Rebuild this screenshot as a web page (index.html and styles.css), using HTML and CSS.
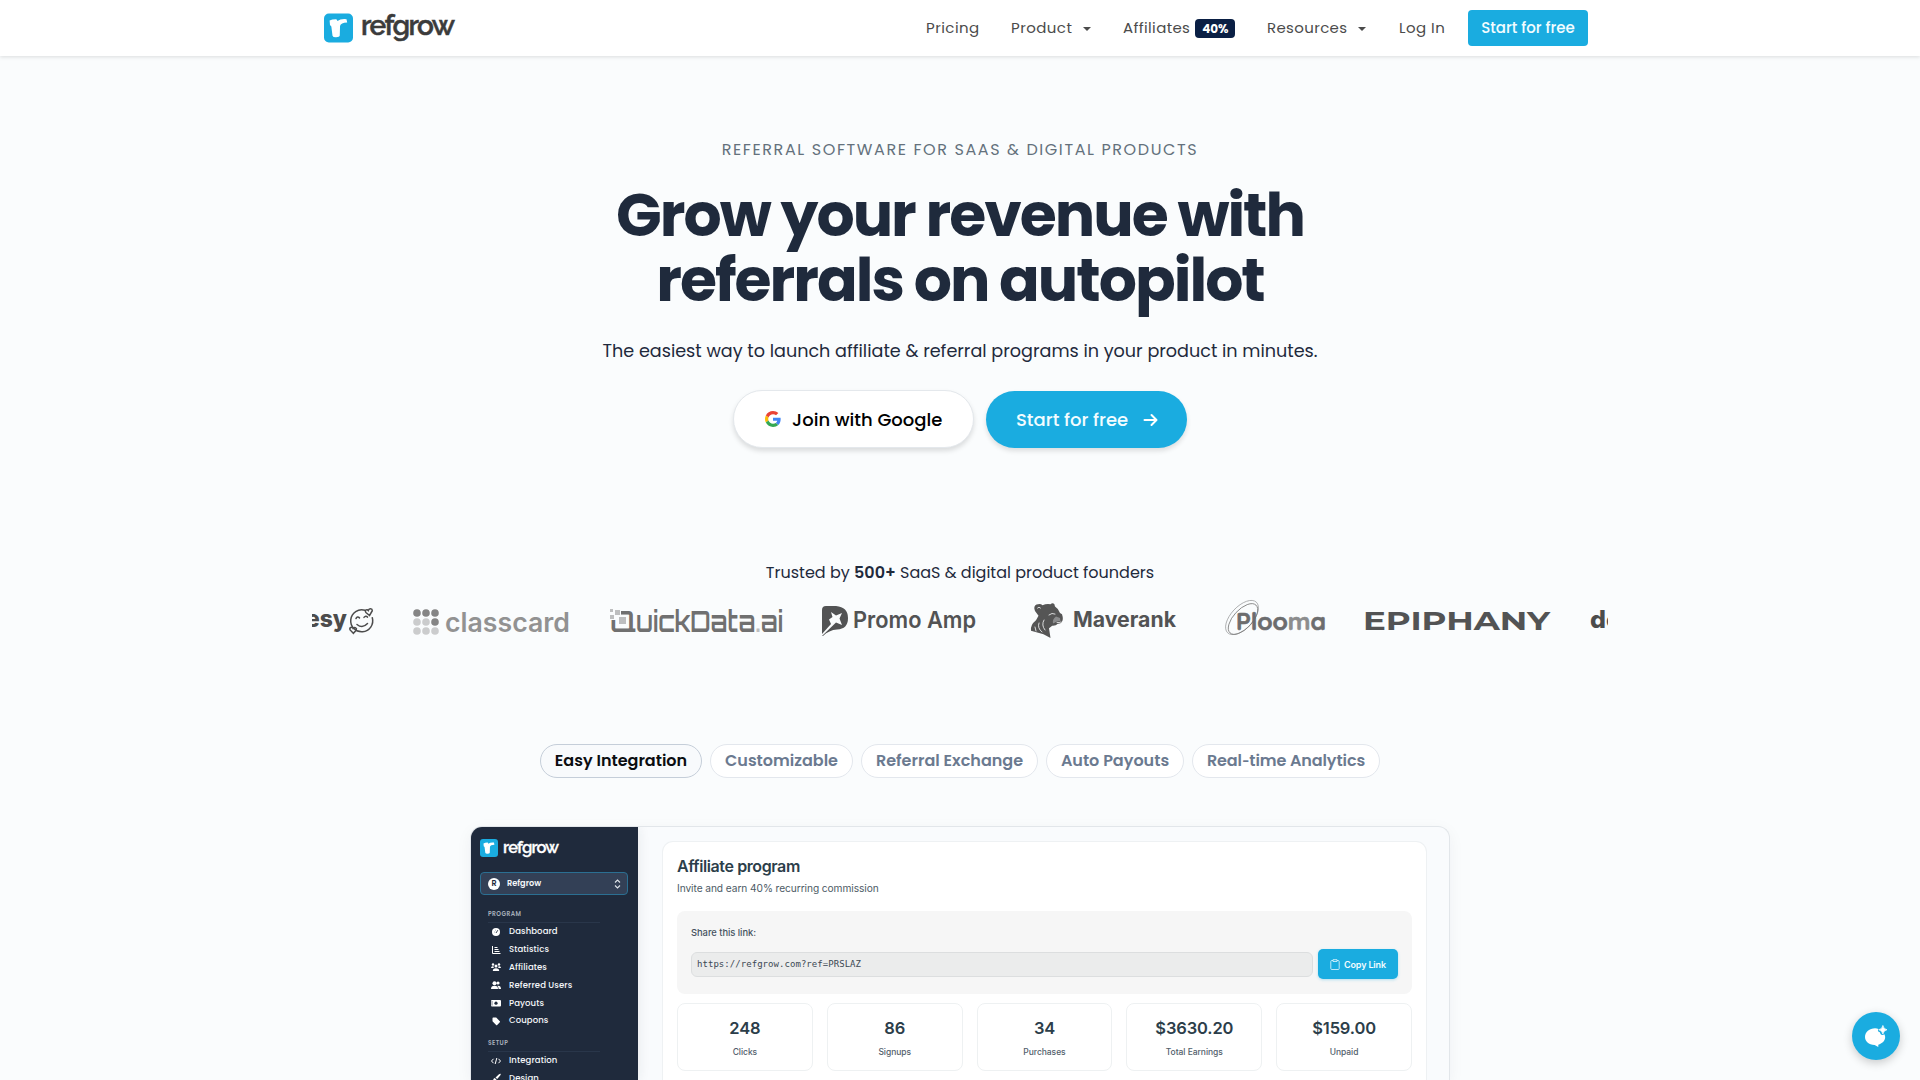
FILE: index.html
```html
<!DOCTYPE html>
<html lang="en">
<head>
<meta charset="utf-8">
<title>Refgrow</title>
<link rel="stylesheet" href="styles.css">
</head>
<body>
<svg class="defs" width="0" height="0" aria-hidden="true">
  <symbol id="mark" viewBox="0 0 30 30">
    <rect width="30" height="30" rx="5" fill="#1aace0"/>
    <path d="M5.800 7.300Q8.500 5.800 12.800 5.900L14 7.800Q17 5.300 23.300 5.900L24 9.400Q17.300 9.600 16.600 13L16.300 22.800Q16 24.500 12.500 24.600Q9.300 24.700 8.800 23L7.600 13.500L6.200 12Z" fill="#fff"/>
  </symbol>
</svg>

<header class="header">
  <a class="brand">
    <svg class="brand-mark"><use href="#mark"/></svg>
    <svg class="brand-word" viewBox="0 0 96 36"><text x="0" y="25" textLength="94">refgrow</text></svg>
  </a>
  <nav class="nav">
    <a class="n-pricing">Pricing</a>
    <a class="n-product">Product<i class="caret"></i></a>
    <a class="n-affiliates">Affiliates<b class="badge">40%</b></a>
    <a class="n-resources">Resources<i class="caret"></i></a>
    <a class="n-login">Log In</a>
    <a class="nav-cta">Start for free</a>
  </nav>
</header>

<main>
  <section class="hero">
    <p class="eyebrow">REFERRAL SOFTWARE FOR SAAS &amp; DIGITAL PRODUCTS</p>
    <h1>Grow your revenue with<br>referrals on autopilot</h1>
    <p class="lead">The easiest way to launch affiliate &amp; referral programs in your product in minutes.</p>
    <div class="actions">
      <a class="btn btn-google">
        <svg width="16" height="16" viewBox="0 0 48 48"><path fill="#EA4335" d="M24 9.500c3.540 0 6.710 1.220 9.210 3.600l6.850-6.850C35.900 2.380 30.470 0 24 0 14.620 0 6.510 5.380 2.560 13.220l7.980 6.190C12.430 13.720 17.740 9.500 24 9.500z"/><path fill="#4285F4" d="M46.980 24.550c0-1.570-.15-3.090-.38-4.550H24v9.020h12.940c-.58 2.960-2.260 5.480-4.780 7.180l7.730 6c4.510-4.180 7.090-10.360 7.090-17.650z"/><path fill="#FBBC05" d="M10.530 28.590c-.48-1.450-.76-2.990-.76-4.590s.27-3.140.76-4.590l-7.980-6.190C.92 16.460 0 20.120 0 24c0 3.880.92 7.540 2.560 10.780l7.970-6.190z"/><path fill="#34A853" d="M24 48c6.480 0 11.930-2.130 15.890-5.810l-7.730-6c-2.150 1.450-4.920 2.300-8.160 2.300-6.260 0-11.570-4.220-13.470-9.910l-7.980 6.190C6.510 42.620 14.620 48 24 48z"/></svg>
        <span>Join with Google</span>
      </a>
      <a class="btn btn-start"><span>Start for free</span>
        <svg width="15" height="14" viewBox="0 0 15 14" fill="none" stroke="#fff" stroke-width="2" stroke-linecap="round" stroke-linejoin="round"><path d="M1.500 7h11.500M8.500 2l5 5-5 5"/></svg>
      </a>
    </div>
  </section>

  <section class="trusted">
    <p>Trusted by <b>500+</b> SaaS &amp; digital product founders</p>
    <div class="logos">
      <svg width="63" height="48" fill="#4c4c4c">
        <text x="-6" y="31" font-size="23" font-weight="800" textLength="41" lengthAdjust="spacingAndGlyphs">esy</text>
        <g fill="none" stroke="#4c4c4c" stroke-width="1.500" stroke-linecap="round">
          <path d="M53 14.300a11 11 0 1 0 7.300 7.500"/><path d="M44 22.500q1.500-2.500 3.500-.6M52 21.400q1.800-2.200 3.500-.3M45 28.500q5.500 4.500 10.500-.9"/>
          <path d="M57.500 19.500l-3.600-3c-1.600-2 .8-4 2.400-2 1-2.500 4-2.300 4 .2zM41.300 37.300l-3.200-3.400c-1-2.300 1.800-3.600 3-1.400 1.700-1.800 4.200-.4 3.100 1.700z"/>
        </g>
      </svg>
      <svg width="158" height="48">
        <g fill="#858585"><circle cx="4" cy="17" r="3.800"/><circle cx="13" cy="17" r="3.800"/><circle cx="22" cy="17" r="3.800"/><circle cx="22" cy="26" r="3.800"/></g>
        <g fill="#cbcccd"><circle cx="4" cy="26" r="3.800"/><circle cx="13" cy="26" r="3.800"/><circle cx="4" cy="35" r="3.800"/><circle cx="13" cy="35" r="3.800"/><circle cx="22" cy="35" r="3.800"/></g>
        <text x="32" y="36" font-size="27" font-weight="600" fill="#929292" textLength="125" lengthAdjust="spacingAndGlyphs">classcard</text>
      </svg>
      <svg width="175" height="48" class="quick">
        <text x="1" y="36" font-size="29" font-weight="600" textLength="26" lengthAdjust="spacingAndGlyphs">Q</text>
        <text x="27" y="36" font-size="29" font-weight="600" textLength="147" lengthAdjust="spacingAndGlyphs">uickData<tspan fill="#bdbebf">.</tspan>ai</text>
        <rect x="0" y="12" width="12" height="12" fill="#fafcfd"/>
        <g fill="#bdbebf"><rect x="1" y="13" width="3" height="3"/><rect x="6" y="14" width="5" height="5"/><rect x="1" y="19" width="4" height="4"/><rect x="10" y="21" width="7" height="7"/></g>
      </svg>
      <svg width="154" height="48" fill="#525354">
        <path d="M4 10h10q12 1 12 12 0 11-11 11.500-8 .5-14 6.500H0V14q0-4 4-4z"/>
        <path fill="#fafcfd" d="M9 16l5 3.500 6-2.500-2.500 5.500L20 29l-6-2.500L2 38 0 40v-2L9 28l-2-4.500 3.500-2.500z"/>
        <text x="31" y="32" font-size="23" font-weight="600" textLength="123" lengthAdjust="spacingAndGlyphs">Promo Amp</text>
      </svg>
      <svg width="173" height="48">
        <path fill="#555" d="M21 15q-2-5 1.500-6.500 4-1.500 6 .8 4-2 8-1.100 2-1.800 3.800-.2l.7 2.600q4 2.600 5 6.400l2 1.300q1.700 5-.2 7.700-1 2-4 1.800-2 2.300-5.600 2l-3.200 2.400 1.500 9.700-7-3.700-12.500-3.500q-.8-6 5-10.500l2.500-4.500z"/>
        <path fill="none" stroke="#e8e9ea" stroke-width=".9" stroke-linecap="round" d="M23.500 12q1.500-2 3 0M35 19l3-1.500 3 .6M25 27q-2 5 3 9M30 24q-3 5 1 10M43 26.500q2 .5 4-.5M21 31l1 4"/>
        <path d="M42 20.500l4 1.500.5 3-3.500.5-4 2q-1-4 3-7z" fill="#8b8c8d"/>
        <text x="59" y="31" font-size="21" font-weight="700" fill="#525354" textLength="103" lengthAdjust="spacingAndGlyphs">Maverank</text>
      </svg>
      <svg width="102" height="48">
        <g fill="none" stroke="#a2a3a4" stroke-width=".8"><ellipse cx="17" cy="21.500" rx="21" ry="11" transform="rotate(-47 17 21.500)"/><ellipse cx="18" cy="23" rx="19" ry="9.500" transform="rotate(-47 18 23)" stroke="#777"/></g>
        <text class="plooma" x="11" y="34" font-size="24" font-weight="700" fill="#6c6d6e" stroke="#6c6d6e" stroke-width=".6" textLength="90" lengthAdjust="spacingAndGlyphs">Ploo<tspan fill="#8c8d8e" stroke="#8c8d8e">m</tspan>a</text>
      </svg>
      <svg width="187" height="48" fill="#525354"><text class="epiphany" x="-2" y="34" font-size="26" font-weight="700" textLength="187" lengthAdjust="spacingAndGlyphs">EPIPHANY</text></svg>
      <svg width="30" height="48" fill="#4c4c4c"><text x="0" y="32" font-size="24" font-weight="800" textLength="31" lengthAdjust="spacingAndGlyphs">de</text></svg>
    </div>
  </section>

  <div class="tabs">
    <a class="tab active">Easy Integration</a>
    <a class="tab tab-2">Customizable</a>
    <a class="tab tab-3">Referral Exchange</a>
    <a class="tab tab-4">Auto Payouts</a>
    <a class="tab tab-5">Real<span class="hyphen">-</span>time Analytics</a>
  </div>

  <section class="demo">
    <aside class="side">
      <div class="side-brand"><svg width="18" height="18"><use href="#mark"/></svg>
        <svg class="side-word" width="57" height="20"><text x="0" y="13.500" textLength="56">refgrow</text></svg></div>
      <div class="project"><span class="avatar">R</span><span>Refgrow</span>
        <svg width="7" height="10" viewBox="0 0 7 10" fill="none" stroke="#dfe4ea" stroke-width="1.100"><path d="M1 3.500L3.500 1 6 3.500M1 6.500L3.500 9 6 6.500"/></svg></div>
      <h4>PROGRAM</h4>
      <ul>
        <li><svg viewBox="0 0 10 10"><circle cx="5" cy="5" r="4"/><path d="M5 6l1.800-2.800M3 5h.4M4 3.200h.4" stroke="#1f2a3c" stroke-width=".9"/></svg>Dashboard</li>
        <li><svg viewBox="0 0 10 10" fill="none" stroke="#fff"><path d="M1.500 1v7.500H9.500M3.500 2.500h3M3.500 4.500h4M3.500 6.500h5"/></svg>Statistics</li>
        <li><svg viewBox="0 0 10 10"><circle cx="2" cy="2.500" r="1.200"/><circle cx="8" cy="2.500" r="1.200"/><circle cx="5" cy="4" r="1.500"/><path d="M0 6q0-2 2-1.800l1 .9-.6.9zM10 6q0-2-2-1.800l-1 .9.600.9zM1.800 9q0-2.800 3.200-2.800T8.200 9z"/></svg>Affiliates</li>
        <li><svg viewBox="0 0 10 10"><circle cx="3.500" cy="3.200" r="2"/><circle cx="7" cy="3" r="1.600"/><path d="M0 9q0-3.300 3.500-3.300T7 9zM7.600 9q0-2-1.200-3.300Q10 5.300 10 9z"/></svg>Referred Users</li>
        <li><svg viewBox="0 0 10 10"><rect y="2" width="10" height="6.500" rx="1"/><circle cx="5" cy="5.200" r="1.600" fill="#1f2a3c"/><path d="M1 3v4.500" stroke="#1f2a3c" stroke-width=".6"/></svg>Payouts</li>
        <li><svg viewBox="0 0 10 10"><path d="M1.500 2.200q0-.7.7-.7h3l3.600 3.700q.5.600 0 1.100L6.200 8.900q-.6.500-1.100 0L1.500 5.200z"/></svg>Coupons</li>
      </ul>
      <h4 class="setup">SETUP</h4>
      <ul>
        <li><svg viewBox="0 0 10 10" fill="none" stroke="#fff"><path d="M2.500 2.800L.5 5l2 2.200M7.500 2.800l2 2.200-2 2.200M5.800 2L4.200 8"/></svg>Integration</li>
        <li><svg viewBox="0 0 10 10"><path d="M9.500.8q.6.600-.3 1.700L6.200 6 4.500 4.400 8 1.200q1-.8 1.500-.4zM3.800 5l1.700 1.700Q5 9.500 1 9q1.200-.7 1.200-2T3.800 5z"/></svg>Design</li>
      </ul>
    </aside>
    <div class="pane">
      <div class="card">
        <h2>Affiliate program</h2>
        <p class="sub">Invite and earn 40% recurring commission</p>
        <div class="share">
          <p>Share this link:</p>
          <div class="share-row"><div class="url">https://refgrow.com?ref=PRSLAZ</div>
            <a class="copy"><svg width="10" height="11" viewBox="0 0 10 11" fill="none" stroke="#e9f8fe" stroke-width=".8"><path d="M3 1.500H1.800Q.8 1.500.8 2.500v7q0 1 1 1h6.400q1 0 1-1v-7q0-1-1-1H7M3 .7h4v1.800H3z"/></svg>Copy Link</a></div>
        </div>
        <div class="stats">
          <div><b>248</b><span>Clicks</span></div>
          <div><b>86</b><span>Signups</span></div>
          <div><b>34</b><span>Purchases</span></div>
          <div><b>$3630.20</b><span>Total Earnings</span></div>
          <div><b>$159.00</b><span>Unpaid</span></div>
        </div>
      </div>
    </div>
  </section>
</main>

<a class="chat"><svg width="24" height="24" viewBox="0 0 24 24" fill="#fff"><path d="M11 3.500c1.500 0 2.700.3 3.700.8-1.200 1.400-.6 3 1.500 3.700.6 2.700 2.300 3.500 5 2.200.4 1 .8 2 .8 3 0 4.300-3.500 7.300-7.500 8.300V24l-4-2.200C4 21.300 0 17.500 0 13c0-5.500 4.900-9.500 11-9.500z"/><path d="M19.500.5q.7 4 4.500 4.700-3.800.7-4.500 4.700-.7-4-4.500-4.700 3.800-.7 4.500-4.700z" stroke="#fff" stroke-width=".8"/></svg></a>
</body>
</html>
```
FILE: styles.css
```css
* { box-sizing: border-box; margin: 0; padding: 0; }
body {
  height: 1080px;
  overflow: hidden;
  background: #fafcfd;
  font-family: Poppins, Inter, "Liberation Sans", sans-serif;
  color: #1f2a3c;
  white-space: nowrap;
}
svg { flex: none; display: block; }
.defs { position: absolute; }

.header {
  height: 56px;
  padding: 0 332px 0 324px;
  display: flex;
  align-items: center;
  justify-content: space-between;
  background: #fff;
  box-shadow: 0 1px 4px rgba(0, 0, 0, .13);
  position: relative;
}
.brand { display: flex; align-items: center; gap: 8px; }
.brand-mark { width: 29px; height: 30px; }
.brand-word { width: 96px; height: 36px; overflow: visible; font: 600 28px Raleway, Poppins, sans-serif; fill: #3b3b3b; stroke: #3b3b3b; stroke-width: .5px; }
.nav { display: flex; align-items: center; font-size: 15px; line-height: 22px; color: #4b4b4b; letter-spacing: .45px; }
.nav a { display: flex; align-items: center; padding-bottom: 1px; }
.n-pricing { width: 85px; }
.n-product { width: 112px; }
.n-affiliates { width: 144px; }
.n-resources { width: 132px; }
.n-login { width: 69px; }
.nav .n-affiliates, .nav .n-resources { letter-spacing: .35px; }
.caret { margin: 2px 0 0 11px; border: 4.500px solid transparent; border-top-color: #4b4b4b; border-bottom: 0; }
.badge {
  margin: 2px 0 0 5px;
  width: 40px; height: 19px;
  border-radius: 4px;
  background: #0a1f44;
  color: #fff;
  font-size: 12px; line-height: 19px;
  letter-spacing: -.1px;
  text-align: center;
}
.nav .nav-cta {
  width: 120px; height: 36px;
  justify-content: center;
  border-radius: 4px;
  background: #1aace0;
  color: #f2fcff;
  font-weight: 500;
  letter-spacing: 0;
}

.hero { padding-top: 82px; text-align: center; }
.eyebrow { font-size: 16px; line-height: 24px; letter-spacing: 1.600px; color: #64717c; }
h1 { margin-top: 21px; font-size: 60px; line-height: 65px; font-weight: 700; letter-spacing: -1.980px; }
.lead { margin-top: 24px; font-size: 17.600px; line-height: 28px; }
.actions { margin-top: 25px; display: flex; justify-content: center; gap: 12px; }
.btn { height: 58px; border-radius: 29px; display: flex; align-items: center; font-size: 18px; font-weight: 500; }
.btn-google {
  width: 241px; padding-left: 31px; gap: 11px;
  background: #fff; color: #000;
  border: 1px solid #e4e8ec;
  box-shadow: 0 3px 5px rgba(0, 0, 0, .13);
}
.btn-start {
  width: 201px; height: 57px; margin-top: 1px; padding-left: 30px; gap: 15px;
  background: #1aace0; color: #f2fcff;
  box-shadow: 0 3px 5px rgba(0, 0, 0, .12);
}

.trusted { margin-top: 113px; text-align: center; }
.trusted p { font-size: 16px; line-height: 24px; }
.trusted b { font-weight: 600; }
.logos {
  margin: 11px auto 0;
  width: 1296px; height: 48px;
  display: flex; gap: 38px;
  overflow: hidden;
  font-family: Inter, sans-serif;
}
.logos svg { overflow: visible; }
.quick { font-family: Orbitron, Inter, sans-serif; fill: #707070; }
.plooma { font-family: Quicksand, Inter, sans-serif; }
.epiphany { font-family: Montserrat, Inter, sans-serif; }

.tabs { margin-top: 100px; display: flex; justify-content: center; gap: 8px; }
.tab {
  width: 143px; height: 34px;
  border: 1px solid #e3e7ed;
  border-radius: 17px;
  background: #fff;
  color: #6b7a90;
  font-size: 16px; line-height: 32px; font-weight: 600;
  text-align: center;
}
.tab.active { width: 162px; background: #f8fafc; border-color: #c5ced9; color: #0b0d10; }
.tab-3 { width: 177px; }
.tab-4 { width: 138px; }
.tab-5 { width: 188px; letter-spacing: -.1px; }
.hyphen { font-family: Inter, sans-serif; line-height: 1; }

.demo {
  margin: 48px auto 0;
  width: 980px; height: 254px;
  display: flex;
  border: 1px solid #e2e6ea;
  border-bottom: 0;
  border-radius: 12px 12px 0 0;
  overflow: hidden;
  background: #f9fbfd;
  box-shadow: 0 4px 16px rgba(30, 42, 60, .05);
}
.side { width: 167px; padding: 12px 10px 0 9px; background: #1f2a3c; color: #f5f7fa; flex: none; z-index: 1; box-shadow: 0 0 12px rgba(30, 42, 60, .09); }
.side-brand { display: flex; gap: 5px; height: 20px; }
.side-word { overflow: visible; font: 600 16.500px Raleway, Poppins, sans-serif; fill: #fff; stroke: #fff; stroke-width: .3px; }
.project {
  margin-top: 13px;
  height: 23px; width: 148px;
  display: flex; align-items: center;
  padding: 0 6px 0 7px;
  border: 1px solid #2b6f92;
  border-radius: 4px;
  background: #334056;
  font-size: 8.200px; font-weight: 600;
}
.project svg { margin-left: auto; }
.avatar { width: 12px; height: 12px; margin-right: 7px; border-radius: 50%; background: #fff; color: #1f2a3c; text-align: center; line-height: 12px; font-size: 8px; }
.side h4 {
  margin: 12px 0 0 8px; width: 112px; height: 16px;
  padding-top: 3px;
  border-bottom: 1px solid #29364a;
  font-size: 6px; line-height: 8px; font-weight: 600; letter-spacing: .42px;
  color: #a7afbb;
}
.side .setup { margin-top: 6px; }
.side ul { list-style: none; padding: 0 0 0 11px; }
.side li { display: flex; align-items: center; gap: 8px; height: 17.800px; font-size: 8.500px; font-weight: 500; letter-spacing: .1px; }
.side li svg { width: 10px; height: 10px; fill: #fff; }
.side li svg[fill="none"] { fill: none; }

.pane { flex: 1; padding: 14px 22px 0 24px; }
.card {
  height: 239px; padding: 14px 14px 0;
  border: 1px solid #eef1f3; border-bottom: 0; border-radius: 11px 11px 0 0;
  background: #fff; color: #2c3e4a;
  font-family: Inter, sans-serif;
}
.card h2 { font-size: 16px; line-height: 20px; font-weight: 600; letter-spacing: -.4px; }
.sub { margin-top: 4px; font-size: 10.200px; line-height: 16px; letter-spacing: -.08px; color: #4c5a65; }
.share { margin-top: 15px; height: 83px; padding: 15px 14px 0; border-radius: 8px; background: #f6f6f6; }
.share p { font-size: 9.400px; line-height: 13px; font-weight: 500; letter-spacing: -.04px; color: #45535e; }
.share-row { margin-top: 10px; display: flex; align-items: center; gap: 5px; height: 30px; }
.url {
  flex: 1; height: 25px; padding-left: 5px;
  border: 1px solid #dcdedf; border-radius: 6px; background: #ebecec;
  font: 9px/23px "DejaVu Sans Mono", monospace; letter-spacing: .05px; color: #3b4853;
}
.copy {
  width: 80px; height: 30px;
  display: flex; align-items: center; justify-content: center; gap: 4px;
  border-radius: 5px; background: #1aace0; color: #f2fcff;
  font-size: 9px; font-weight: 600; letter-spacing: -.15px;
  box-shadow: 0 1px 3px rgba(26, 172, 224, .3);
}
.stats { margin-top: 9px; display: grid; grid-template-columns: repeat(5, 1fr); gap: 14px; }
.stats div { height: 68px; padding-top: 14px; border: 1px solid #eef1f2; border-radius: 8px; text-align: center; }
.stats b, .stats span { display: block; }
.stats b { font-size: 16.500px; line-height: 20px; font-weight: 600; letter-spacing: -.15px; }
.stats span { margin-top: 7px; font-size: 8.500px; line-height: 14px; font-weight: 500; letter-spacing: -.05px; color: #52606b; }

.chat {
  position: fixed; right: 20px; bottom: 20px;
  width: 48px; height: 48px; border-radius: 50%;
  background: #1aace0;
  box-shadow: 0 3px 10px rgba(0, 0, 0, .2);
  display: flex; align-items: center; justify-content: center;
}
.chat svg { width: 22px; height: 22px; }
```
